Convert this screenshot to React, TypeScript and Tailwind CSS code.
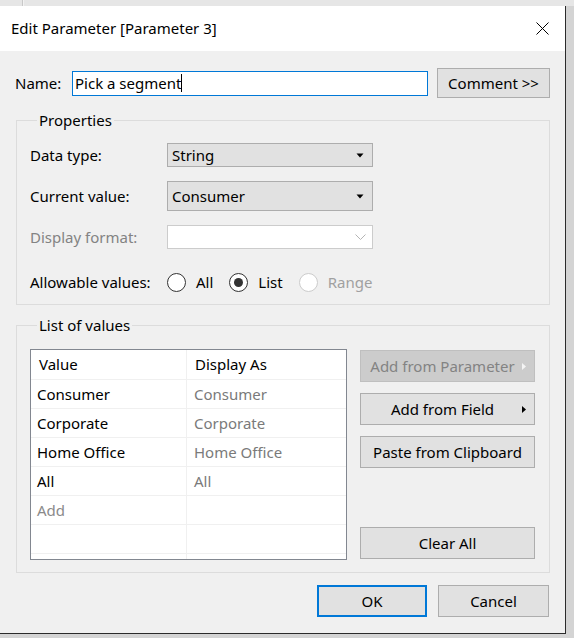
import React from 'react';

const font = { fontFamily: '"Noto Sans", "Open Sans", sans-serif' };

function Caret() {
  return (
    <svg width="8" height="5" viewBox="0 0 8 5" className="shrink-0">
      <polygon points="0.5,0.5 7.5,0.5 4,4.5" fill="#000" />
    </svg>
  );
}

function Select({ value, tall }: { value: string; tall?: boolean }) {
  return (
    <div
      className={`w-[206px] ${tall ? 'h-[30px]' : 'h-[24px]'} bg-[#e1e1e1] border border-[#adadad] flex items-center justify-between pl-[4px] pr-[8px]`}
    >
      <span>{value}</span>
      <Caret />
    </div>
  );
}

function Radio({ label, checked, disabled }: { label: string; checked?: boolean; disabled?: boolean }) {
  return (
    <div className="flex items-center gap-[10px]">
      <span
        className={`w-[19px] h-[19px] rounded-full bg-white border flex items-center justify-center ${
          disabled ? 'border-[#cccccc]' : 'border-[#333333]'
        }`}
      >
        {checked && <span className="w-[9px] h-[9px] rounded-full bg-[#333333]" />}
      </span>
      <span className={disabled ? 'text-[#a0a0a0]' : 'text-black'}>{label}</span>
    </div>
  );
}

function SideButton({ label, arrow, disabled }: { label: string; arrow?: boolean; disabled?: boolean }) {
  return (
    <div
      className={`relative h-[32px] flex items-center justify-center border ${
        disabled ? 'bg-[#cccccc] border-[#bfbfbf] text-[#838383]' : 'bg-[#e1e1e1] border-[#adadad] text-black'
      }`}
    >
      <span className={arrow ? 'pr-[10px]' : ''}>{label}</span>
      {arrow && (
        <svg width="4" height="7" viewBox="0 0 4 7" className="absolute right-[8px] top-[12px]">
          <polygon points="0,0 4,3.5 0,7" fill={disabled ? '#f4f4f4' : '#000'} />
        </svg>
      )}
    </div>
  );
}

const rows = [
  { value: 'Consumer', display: 'Consumer' },
  { value: 'Corporate', display: 'Corporate' },
  { value: 'Home Office', display: 'Home Office' },
  { value: 'All', display: 'All' },
];

export default function App() {
  return (
    <div className="w-[574px] h-[638px] bg-[#d4d4d4] flex flex-col text-[15px] text-black" style={font}>
      {/* window behind */}
      <div className="h-[6px] bg-[#e6e6e6] shrink-0">
        <div className="ml-[22px] h-full w-[2px] border-l border-[#c8c8c8] bg-[#f2f2f2]" />
      </div>

      <div className="w-[566px] h-[628px] border-r border-b border-[#2b2b2b] flex flex-col shrink-0">
        {/* Title bar */}
        <div className="h-[45px] bg-white flex items-center justify-between pl-[11px] pr-[16px] shrink-0">
          <span>Edit Parameter [Parameter 3]</span>
          <svg width="13" height="13" viewBox="0 0 13 13">
            <path d="M0.5 0.5 L12.5 12.5 M12.5 0.5 L0.5 12.5" stroke="#000" strokeWidth="1" />
          </svg>
        </div>

        {/* Body */}
        <div className="flex-1 bg-[#f0f0f0] flex flex-col pl-[15px]">
          {/* Name */}
          <div className="flex items-center mt-[17px] h-[30px]">
            <span className="w-[57px]">Name:</span>
            <div className="w-[356px] h-[25px] bg-white border border-[#0078d7] flex items-center pl-[2px]">
              <span>Pick a segment</span>
              <span className="w-px h-[18px] bg-black" />
            </div>
            <div className="ml-[9px] w-[113px] h-[30px] bg-[#e1e1e1] border border-[#adadad] flex items-center justify-center">
              Comment &gt;&gt;
            </div>
          </div>

          {/* Properties */}
          <fieldset className="mt-[12px] ml-px w-[534px] border border-[#dcdcdc] px-[13px] pb-[10px]">
            <legend className="ml-[7px] px-[2px] leading-[20px]">Properties</legend>
            <div className="flex items-center h-[24px] mt-[13px]">
              <span className="w-[137px]">Data type:</span>
              <Select value="String" />
            </div>
            <div className="flex items-center h-[30px] mt-[14px]">
              <span className="w-[137px]">Current value:</span>
              <Select value="Consumer" tall />
            </div>
            <div className="flex items-center h-[24px] mt-[14px]">
              <span className="w-[137px] text-[#838383]">Display format:</span>
              <div className="w-[206px] h-[24px] bg-white border border-[#cccccc] flex items-center justify-end pr-[6px]">
                <svg width="11" height="6" viewBox="0 0 11 6">
                  <polyline points="0.5,0.5 5.5,5.5 10.5,0.5" fill="none" stroke="#b4b4b4" strokeWidth="1" />
                </svg>
              </div>
            </div>
            <div className="flex items-center h-[24px] mt-[21px]">
              <span className="w-[137px]">Allowable values:</span>
              <div className="flex items-center gap-[16px]">
                <Radio label="All" />
                <Radio label="List" checked />
                <Radio label="Range" disabled />
              </div>
            </div>
          </fieldset>

          {/* List of values */}
          <fieldset className="mt-[10px] ml-px w-[534px] border border-[#dcdcdc] px-[13px] pb-[12px]">
            <legend className="ml-[7px] px-[2px] leading-[20px]">List of values</legend>
            <div className="flex mt-[14px] gap-[13px]">
              <div className="w-[317px] h-[211px] bg-white border border-[#828790] overflow-hidden">
                <div className="flex h-[30px] border-b border-[#f0f0f0]">
                  <div className="w-[156px] border-r border-[#f0f0f0] flex items-center pl-[8px]">Value</div>
                  <div className="flex-1 flex items-center pl-[8px]">Display As</div>
                </div>
                {rows.map((r) => (
                  <div key={r.value} className="flex h-[29px] border-b border-[#f0f0f0]">
                    <div className="w-[156px] border-r border-[#f0f0f0] flex items-center pl-[6px]">{r.value}</div>
                    <div className="flex-1 flex items-center pl-[7px] text-[#7a7a7a]">{r.display}</div>
                  </div>
                ))}
                <div className="flex h-[29px] border-b border-[#f0f0f0]">
                  <div className="w-[156px] border-r border-[#f0f0f0] flex items-center pl-[6px] text-[#8a8a8a]">Add</div>
                  <div className="flex-1" />
                </div>
                <div className="flex h-[29px] border-b border-[#f0f0f0]">
                  <div className="w-[156px] border-r border-[#f0f0f0]" />
                  <div className="flex-1" />
                </div>
                <div className="flex h-[29px]">
                  <div className="w-[156px] border-r border-[#f0f0f0]" />
                  <div className="flex-1" />
                </div>
              </div>
              <div className="w-[175px] flex flex-col">
                <div className="mt-[1px]">
                  <SideButton label="Add from Parameter" arrow disabled />
                </div>
                <div className="mt-[11px]">
                  <SideButton label="Add from Field" arrow />
                </div>
                <div className="mt-[11px]">
                  <SideButton label="Paste from Clipboard" />
                </div>
                <div className="mt-auto mb-px">
                  <SideButton label="Clear All" />
                </div>
              </div>
            </div>
          </fieldset>

          {/* OK / Cancel */}
          <div className="flex justify-end mt-[12px] pr-[16px] gap-[11px]">
            <div className="w-[110px] h-[32px] bg-[#e1e1e1] border-2 border-[#0078d7] flex items-center justify-center">OK</div>
            <div className="w-[111px] h-[32px] bg-[#e1e1e1] border border-[#adadad] flex items-center justify-center">Cancel</div>
          </div>
        </div>
      </div>
    </div>
  );
}
